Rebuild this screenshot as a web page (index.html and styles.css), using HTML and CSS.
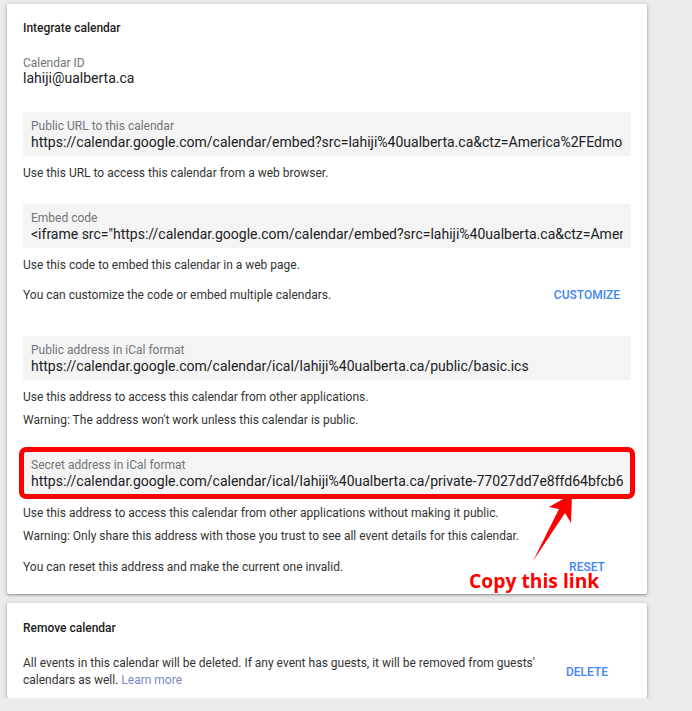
FILE: index.html
```html
<!DOCTYPE html>
<html lang="en">
<head>
  <meta charset="UTF-8" />
  <meta name="viewport" content="width=device-width, initial-scale=1" />
  <title>Calendar settings</title>
  <link rel="stylesheet" href="styles.css">
</head>
<body>
  <div class="page">
    <section class="card card-integrate">
      <h2 class="card-title">Integrate calendar</h2>

      <div class="field-static">
        <div class="field-label">Calendar ID</div>
        <div class="field-value">lahiji@ualberta.ca</div>
      </div>

      <div class="field-box box-public-url">
        <div class="field-label">Public URL to this calendar</div>
        <div class="field-value">https://calendar.google.com/calendar/embed?src=lahiji%40ualberta.ca&amp;ctz=America%2FEdmonton</div>
      </div>
      <p class="hint">Use this URL to access this calendar from a web browser.</p>

      <div class="field-box">
        <div class="field-label">Embed code</div>
        <div class="field-value">&lt;iframe src="https://calendar.google.com/calendar/embed?src=lahiji%40ualberta.ca&amp;ctz=America%2FEdmonton" style="border: 0" width="800" height="600" frameborder="0" scrolling="no"&gt;&lt;/iframe&gt;</div>
      </div>
      <p class="hint">Use this code to embed this calendar in a web page.</p>
      <div class="action-row row-customize">
        <p class="hint">You can customize the code or embed multiple calendars.</p>
        <button class="text-btn">Customize</button>
      </div>

      <div class="field-box box-ical">
        <div class="field-label">Public address in iCal format</div>
        <div class="field-value">https://calendar.google.com/calendar/ical/lahiji%40ualberta.ca/public/basic.ics</div>
      </div>
      <p class="hint">Use this address to access this calendar from other applications.</p>
      <p class="hint hint-follow">Warning: The address won't work unless this calendar is public.</p>

      <div class="field-box box-secret">
        <div class="field-label">Secret address in iCal format</div>
        <div class="field-value">https://calendar.google.com/calendar/ical/lahiji%40ualberta.ca/private-77027dd7e8ffd64bfcb6e2a1/basic.ics</div>
      </div>
      <p class="hint hint-secret">Use this address to access this calendar from other applications without making it public.</p>
      <p class="hint hint-follow">Warning: Only share this address with those you trust to see all event details for this calendar.</p>
      <div class="action-row row-reset">
        <p class="hint">You can reset this address and make the current one invalid.</p>
        <button class="text-btn">Reset</button>
      </div>

      <!-- annotation over the secret address -->
      <svg class="callout-arrow" width="46" height="74" viewBox="530 490 46 74">
        <polygon points="572,494 549,507 559,509 533,561 565,513 571,523" fill="#ff0000" />
      </svg>
      <span class="callout">Copy this link</span>
    </section>

    <section class="card card-remove">
      <h2 class="card-title">Remove calendar</h2>
      <div class="remove-row">
        <p class="hint remove-text">All events in this calendar will be deleted. If any event has guests, it will be removed from guests' calendars as well. <a href="#" class="link">Learn more</a></p>
        <button class="text-btn">Delete</button>
      </div>
    </section>
  </div>
</body>
</html>
```

FILE: styles.css
```css
* {
  box-sizing: border-box;
}

body {
  margin: 0;
  background: #ebebeb;
  font-family: Roboto, 'Liberation Sans', Arial, sans-serif;
  color: #333;
}

.page {
  padding: 4px 0 0 7px;
  width: 647px;
}

.card {
  background: #fff;
  border-radius: 2px;
  box-shadow: 0 1px 2px rgba(0, 0, 0, 0.3), 0 1px 4px 1px rgba(0, 0, 0, 0.12);
  padding: 0 16px;
}

.card-integrate {
  position: relative;
  padding-top: 16px;
  padding-bottom: 19px;
}

.card-remove {
  margin-top: 9px;
  padding-top: 17px;
  padding-bottom: 9px;
}

.card-title {
  margin: 0;
  font-size: 12px;
  line-height: 16px;
  font-weight: 500;
  color: #222;
}

.field-static {
  margin-top: 20px;
}

.field-label {
  font-size: 12px;
  line-height: 14px;
  color: #70757a;
}

.field-value {
  font-size: 14px;
  line-height: 16px;
  color: #202124;
  white-space: nowrap;
  overflow: hidden;
}

.field-box {
  background: #f4f4f4;
  border-radius: 2px;
  padding: 7px 8px 5px;
  margin-top: 23px;
}

.field-box .field-value {
  line-height: 18px;
}

.box-public-url {
  margin-top: 26px;
}

.box-ical {
  margin-top: 33px;
}

.box-secret {
  outline: 5px solid #ff0000;
  outline-offset: -1px;
  border-radius: 3px;
}

.hint {
  margin: 9px 0 0;
  font-size: 12px;
  line-height: 16px;
  color: #333;
}

.hint-follow {
  margin-top: 7px;
}

.hint-secret {
  margin-top: 10px;
}

.action-row {
  display: flex;
  align-items: center;
  justify-content: space-between;
}

.action-row .hint {
  margin: 0;
}

.row-customize {
  margin-top: 14px;
}

.row-reset {
  margin-top: 15px;
}

.text-btn {
  min-width: 88px;
  padding: 0;
  border: none;
  background: none;
  font-family: inherit;
  font-size: 12px;
  line-height: 16px;
  font-weight: 500;
  color: #4285f4;
  text-transform: uppercase;
  text-align: center;
  cursor: pointer;
}

.remove-row {
  display: flex;
  align-items: center;
  margin-top: 19px;
}

.remove-text {
  flex: 1;
  margin: 0;
  line-height: 17px;
}

.link {
  color: #7986cb;
  text-decoration: none;
}

.callout {
  position: absolute;
  left: 462px;
  top: 565px;
  font-family: 'Open Sans', 'DejaVu Sans', sans-serif;
  font-size: 19.3px;
  line-height: 24px;
  font-weight: 700;
  color: #ff0000;
  white-space: nowrap;
}

.callout-arrow {
  position: absolute;
  left: 523px;
  top: 486px;
}
```
